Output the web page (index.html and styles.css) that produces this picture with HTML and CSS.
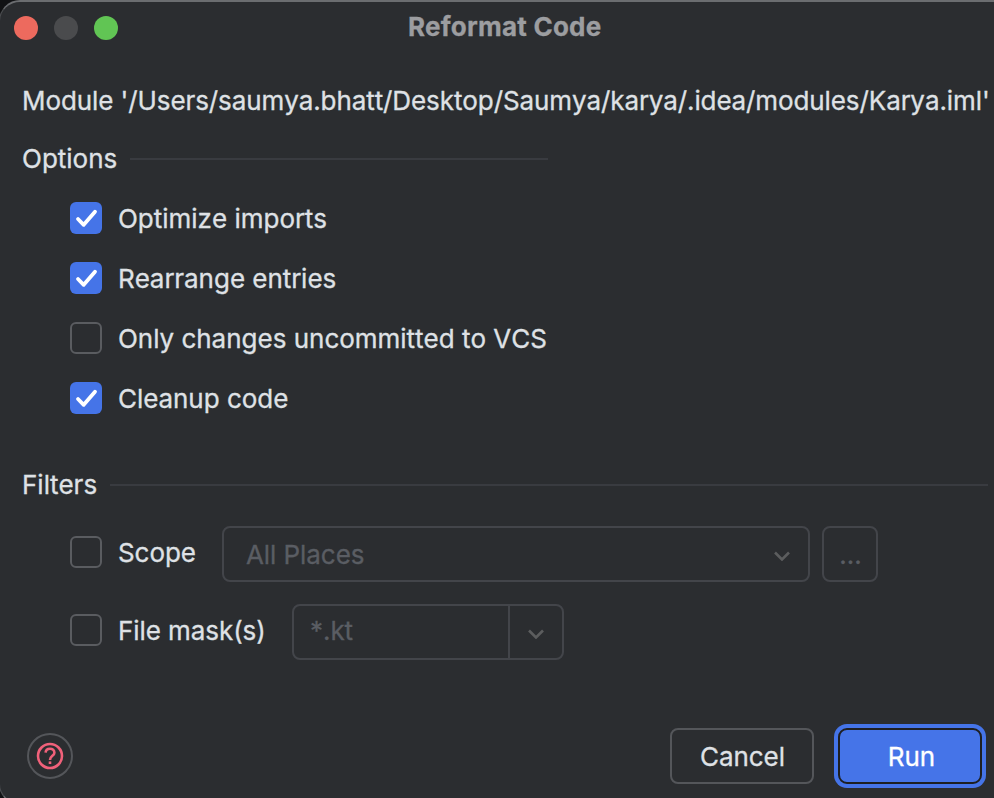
FILE: index.html
```html
<!DOCTYPE html>
<html lang="en">
<head>
<meta charset="utf-8">
<title>Reformat Code</title>
<link rel="stylesheet" href="styles.css">
</head>
<body>
<main class="dialog">
  <header class="titlebar">
    <div class="lights"><span class="light close"></span><span class="light minimize"></span><span class="light zoom"></span></div>
    <h1 class="title">Reformat Code</h1>
  </header>
  <p class="module">Module '/Users/saumya.bhatt/Desktop/Saumya/karya/.idea/modules/Karya.iml'</p>
  <section class="options">
    <h2 class="group-title"><span>Options</span></h2>
    <div class="option"><span class="box checked"><svg viewBox="0 0 32 32"><path d="M8 17 13.7 22.8 25 9.8"/></svg></span><span>Optimize imports</span></div>
    <div class="option"><span class="box checked"><svg viewBox="0 0 32 32"><path d="M8 17 13.7 22.8 25 9.8"/></svg></span><span>Rearrange entries</span></div>
    <div class="option"><span class="box"></span><span>Only changes uncommitted to VCS</span></div>
    <div class="option"><span class="box checked"><svg viewBox="0 0 32 32"><path d="M8 17 13.7 22.8 25 9.8"/></svg></span><span>Cleanup code</span></div>
  </section>
  <section class="filters">
    <h2 class="group-title"><span>Filters</span></h2>
    <div class="filter">
      <div class="filter-label scope-label"><span class="box"></span><span class="label-text">Scope</span></div>
      <div class="combo scope"><span class="value">All Places</span><svg class="chevron" viewBox="0 0 16 10"><path d="M1 1.5 8 8.5 15 1.5"/></svg></div>
      <div class="more"><span>...</span></div>
    </div>
    <div class="filter">
      <div class="filter-label mask-label"><span class="box"></span><span class="label-text">File mask(s)</span></div>
      <div class="combo mask"><span class="value">*.kt</span><span class="arrow"><svg class="chevron" viewBox="0 0 16 10"><path d="M1 1.5 8 8.5 15 1.5"/></svg></span></div>
    </div>
  </section>
  <footer class="footer">
    <div class="help"><svg viewBox="0 0 46 46"><circle class="outer" cx="23" cy="23" r="22"/><circle class="inner" cx="23" cy="23" r="12"/><path class="hook" d="M18.6 19.6C18.7 17.1 20.5 15.7 23 15.7S27.4 17.3 27.4 19.7C27.4 22.9 23 22.9 23 27"/><rect class="dot" x="21.7" y="28.4" width="2.6" height="2.6"/></svg></div>
    <button class="btn cancel">Cancel</button>
    <button class="btn run">Run</button>
  </footer>
</main>
</body>
</html>
```
FILE: styles.css
```css
* { box-sizing: border-box; }
html, body { margin: 0; height: 798px; overflow: hidden; background: #111214; }
body { font: 400 26px/32px Inter, sans-serif; letter-spacing: -0.07px; font-variant-ligatures: none; font-kerning: none; -webkit-text-stroke: 0.3px currentColor; color: #dfe1e5; }
.dialog {
  width: 1014px; height: 805px; margin-left: -1px;
  background: #2b2d30; border: 2px solid #6b6d70; border-left: 1px solid #4b4d50;
  border-radius: 21px; overflow: hidden;
  display: flex; flex-direction: column;
}
.titlebar { height: 52px; width: 994px; flex: none; display: grid; grid-template-columns: 408px 1fr; align-items: center; }
.lights { display: flex; gap: 16px; padding-left: 14px; }
.light { width: 24px; height: 24px; border-radius: 50%; background: #4a4b4d; }
.close { background: #ed6a5e; }
.zoom { background: #61c554; }
.title { margin: 0; font-size: 26px; font-weight: 700; line-height: 32px; letter-spacing: 0.24px; font-kerning: normal; color: #9c9da0; padding-bottom: 2px; white-space: nowrap; }
.module { margin: 31px 0 0 22px; white-space: nowrap; letter-spacing: -0.09px; }
.group-title { margin: 0; padding-left: 22px; font-size: 26px; font-weight: 400; line-height: 32px; letter-spacing: 0; display: flex; align-items: center; gap: 13px; }
.group-title::after { content: ""; height: 2px; flex: 1; background: #393b40; }
.options { width: 548px; margin-top: 26px; }
.options .group-title { margin-bottom: 14px; }
.option { height: 60px; padding-left: 70px; display: flex; align-items: center; gap: 16px; white-space: nowrap; letter-spacing: -0.01px; }
.box { width: 32px; height: 32px; flex: none; border: 2px solid #5a5c60; border-radius: 6px; }
.option .box { margin-bottom: 2px; }
.box.checked { border: 0; background: #4574e8; }
.box svg { display: block; width: 32px; height: 32px; fill: none; stroke: #fff; stroke-width: 3.8; stroke-linecap: round; stroke-linejoin: round; }
.filters { width: 988px; margin-top: 40px; }
.filters .group-title { margin-bottom: 25px; }
.filter { height: 56px; margin-bottom: 22px; padding-left: 70px; display: flex; }
.filter:last-child { margin-bottom: 0; }
.filter-label { display: flex; align-items: center; height: 52px; gap: 16px; white-space: nowrap; }
.label-text { padding-top: 2px; }
.scope-label { width: 152px; }
.mask-label { width: 222px; }
.combo { height: 56px; border: 2px solid #43454a; border-radius: 8px; display: flex; align-items: center; color: #5a5d63; padding-left: 22px; }
.value { flex: 1; }
.scope .value { padding-top: 2px; }
.chevron { width: 16px; height: 10px; fill: none; stroke: #5c5d5e; stroke-width: 2.6; display: block; }
.scope { width: 588px; padding-right: 18px; }
.scope .chevron { margin-top: 4px; }
.mask { width: 272px; padding-left: 16px; }
.mask .value { padding-bottom: 2px; }
.arrow { width: 54px; height: 52px; border-left: 2px solid #43454a; display: flex; align-items: center; justify-content: center; padding-top: 4px; }
.more { width: 56px; height: 56px; margin-left: 12px; border: 2px solid #43454a; border-radius: 8px; display: flex; align-items: center; justify-content: center; color: #5a5d63; padding: 2px 0 0 1px; }
.footer { width: 994px; margin-top: 60px; height: 72px; flex: none; display: flex; align-items: center; padding: 0 12px 0 27px; }
.help { width: 46px; height: 46px; margin-right: auto; }
.help svg { display: block; width: 46px; height: 46px; fill: none; }
.outer { stroke: #54565a; stroke-width: 2; }
.inner { stroke: #f0617a; stroke-width: 2.6; }
.hook { stroke: #f0617a; stroke-width: 2.6; }
.dot { fill: #f0617a; }
.btn { height: 56px; width: 144px; padding: 2px 0 0 1px; font: inherit; font-kerning: inherit; letter-spacing: inherit; color: #dfe1e5; background: transparent; border: 2px solid #54565a; border-radius: 8px; }
.run { margin-left: 24px; padding-left: 3px; color: #fff; background: #4574e8; border-color: #1e1f22; box-shadow: 0 0 0 4px #4574e8; border-radius: 9px; }
```
